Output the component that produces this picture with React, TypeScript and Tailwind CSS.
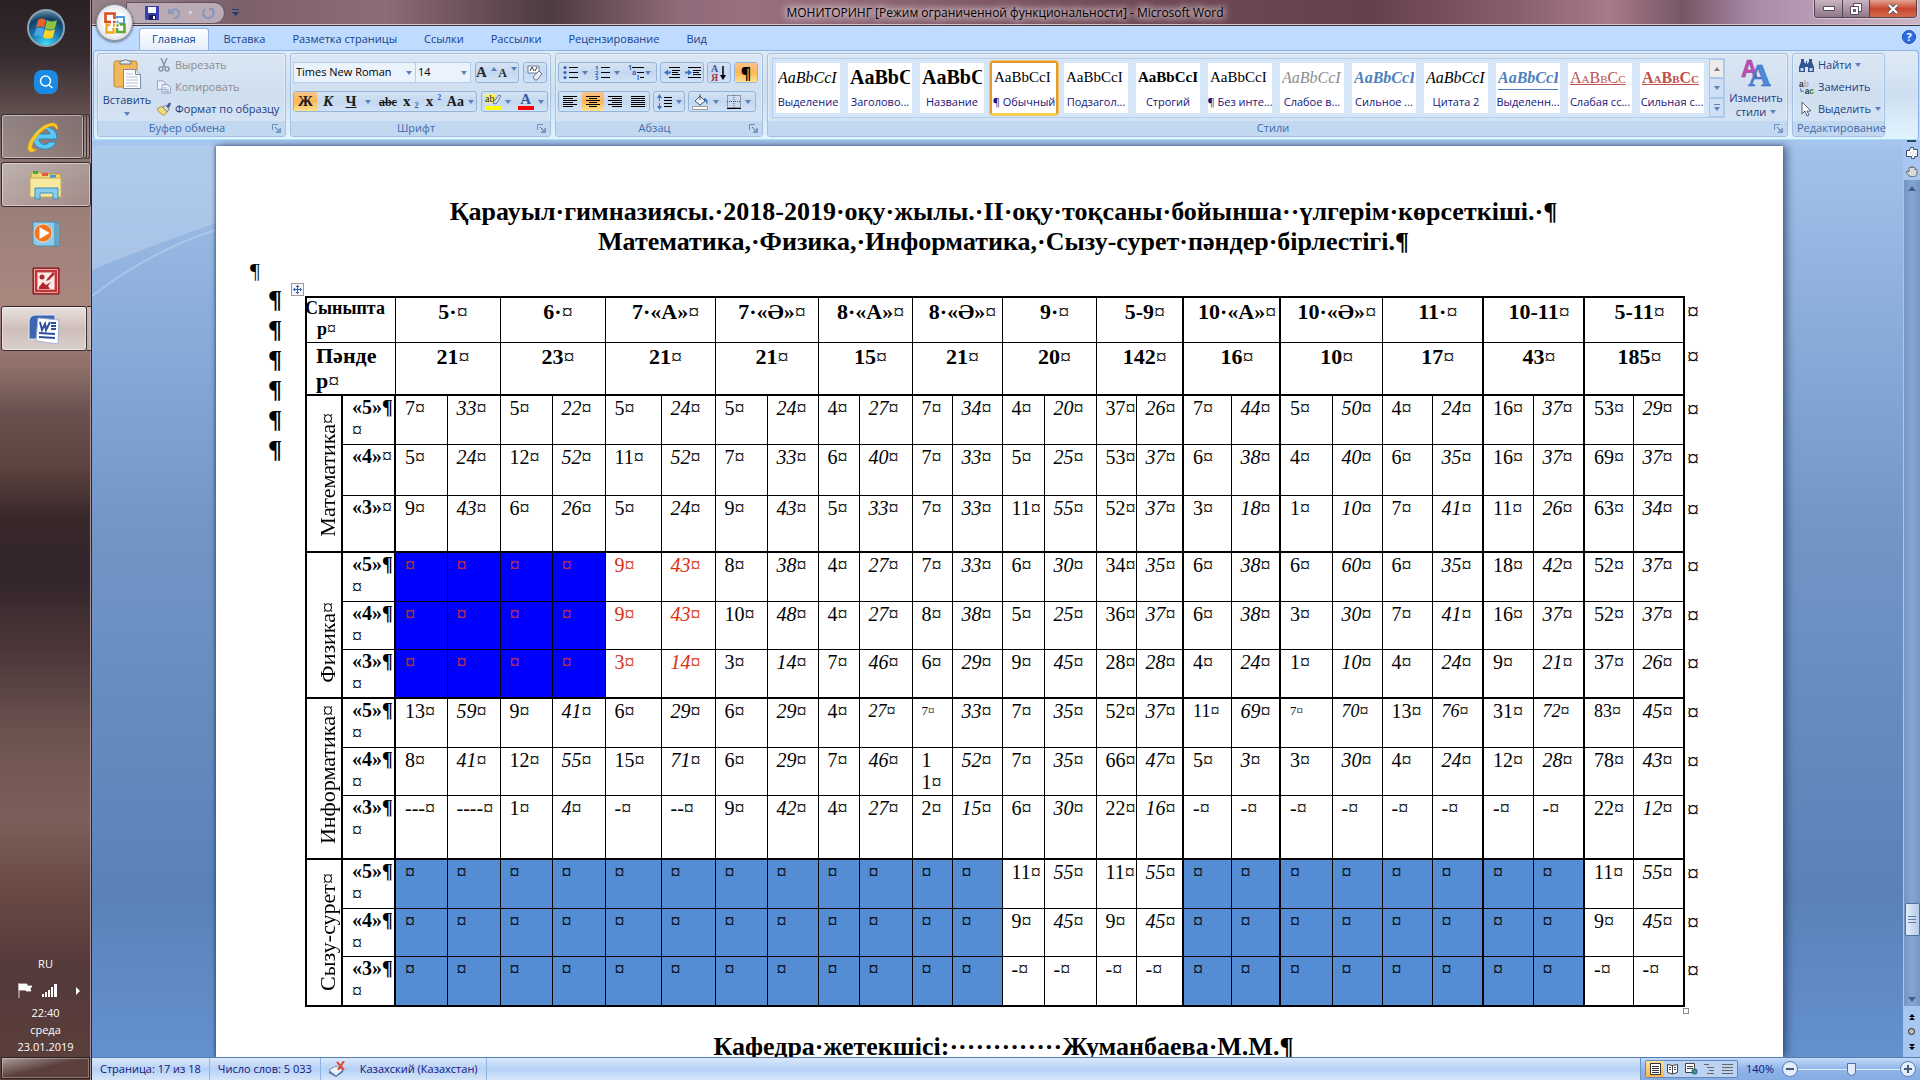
import type { ReactNode } from 'react';

const TABS = ['Главная', 'Вставка', 'Разметка страницы', 'Ссылки', 'Рассылки', 'Рецензирование', 'Вид'];

const STYLES = [
  { name: 'Выделение', sample: 'AaBbCcI', look: 'text-[16px] italic' },
  { name: 'Заголово...', sample: 'AaBbC', look: 'text-[20px] font-bold' },
  { name: 'Название', sample: 'AaBbC', look: 'text-[20px] font-bold' },
  { name: '¶ Обычный', sample: 'AaBbCcI', look: 'text-[15px]', active: true },
  { name: 'Подзагол...', sample: 'AaBbCcI', look: 'text-[15px]' },
  { name: 'Строгий', sample: 'AaBbCcI', look: 'text-[15px] font-bold' },
  { name: '¶ Без инте...', sample: 'AaBbCcI', look: 'text-[15px]' },
  { name: 'Слабое в...', sample: 'AaBbCcI', look: 'text-[16px] italic text-[#8c8c8c]' },
  { name: 'Сильное ...', sample: 'AaBbCcI', look: 'text-[16px] italic font-bold text-[#4f81bd]' },
  { name: 'Цитата 2', sample: 'AaBbCcI', look: 'text-[16px] italic' },
  { name: 'Выделенн...', sample: 'AaBbCcI', look: 'text-[16px] italic font-bold text-[#4f81bd] border-b border-[#4f81bd]' },
  { name: 'Слабая сс...', sample: 'AaBbCc', look: 'text-[16px] [font-variant-caps:small-caps] text-[#c0504d] underline' },
  { name: 'Сильная с...', sample: 'AaBbCc', look: 'text-[16px] font-bold [font-variant-caps:small-caps] text-[#c0504d] underline' },
];

const COL_WIDTHS = [
  36, 53, 52, 53, 52, 53, 56, 54, 52, 51, 41, 53, 40, 50, 42, 52, 40, 47, 48, 49, 52, 50, 50, 51, 50, 51, 49, 51, 20,
];

const CLASSES = ['5·', '6·', '7·«А»', '7·«Ә»', '8·«А»', '8·«Ә»', '9·', '5-9', '10·«А»', '10·«Ә»', '11·', '10-11', '5-11'];
const TOTALS = ['21', '23', '21', '21', '15', '21', '20', '142', '16', '10', '17', '43', '185'];

// b: dark blue cell, s: sky blue cell; suffixes r: red, m: medium, t: tiny
const SUBJECTS = [
  {
    name: 'Математика',
    rows: [
      { mark: '5', wrap: true, h: 'h-[49px]', cells: '7 33 5 22 5 24 5 24 4 27 7 34 4 20 37 26 7 44 5 50 4 24 16 37 53 29' },
      { mark: '4', wrap: false, h: 'h-[51px]', cells: '5 24 12 52 11 52 7 33 6 40 7 33 5 25 53 37 6 38 4 40 6 35 16 37 69 37' },
      { mark: '3', wrap: false, h: 'h-[57px]', cells: '9 43 6 26 5 24 9 43 5 33 7 33 11 55 52 37 3 18 1 10 7 41 11 26 63 34' },
    ],
  },
  {
    name: 'Физика',
    rows: [
      { mark: '5', wrap: true, h: 'h-[49px]', cells: 'b b b b 9r 43r 8 38 4 27 7 33 6 30 34 35 6 38 6 60 6 35 18 42 52 37' },
      { mark: '4', wrap: true, h: 'h-[48px]', cells: 'b b b b 9r 43r 10 48 4 27 8 38 5 25 36 37 6 38 3 30 7 41 16 37 52 37' },
      { mark: '3', wrap: true, h: 'h-[49px]', cells: 'b b b b 3r 14r 3 14 7 46 6 29 9 45 28 28 4 24 1 10 4 24 9 21 37 26' },
    ],
  },
  {
    name: 'Информатика',
    rows: [
      { mark: '5', wrap: true, h: 'h-[49px]', cells: '13 59 9 41 6 29 6 29 4 27m 7t 33 7 35 52 37 11m 69 7t 70m 13 76m 31 72m 83m 45' },
      { mark: '4', wrap: true, h: 'h-[48px]', cells: '8 41 12 55 15 71 6 29 7 46 1/1 52 7 35 66 47 5 3 3 30 4 24 12 28 78 43' },
      { mark: '3', wrap: true, h: 'h-[64px]', cells: '--- ---- 1 4 - -- 9 42 4 27 2 15 6 30 22 16 - - - - - - - - 22 12' },
    ],
  },
  {
    name: 'Сызу-сурет',
    rows: [
      { mark: '5', wrap: true, h: 'h-[49px]', cells: 's s s s s s s s s s s s 11 55 11 55 s s s s s s s s 11 55' },
      { mark: '4', wrap: true, h: 'h-[48px]', cells: 's s s s s s s s s s s s 9 45 9 45 s s s s s s s s 9 45' },
      { mark: '3', wrap: true, h: 'h-[50px]', cells: 's s s s s s s s s s s s - - - - s s s s s s s s - -' },
    ],
  },
];

const THICK_AFTER = [15, 17, 21, 23, 25];

function Arrow({ className = '' }: { className?: string }) {
  return (
    <svg viewBox="0 0 6 4" className={`w-[6px] h-[4px] shrink-0 ${className}`}>
      <path d="M0 0h6L3 4z" fill="#5a82b8" />
    </svg>
  );
}

function Launcher() {
  return (
    <svg viewBox="0 0 9 9" className="w-[9px] h-[9px]">
      <path d="M.5 6V.5H6" fill="none" stroke="#6a8fbe" />
      <path d="M3 3l3 3" stroke="#4a6f9f" />
      <path d="M8.5 4v4.5H4z" fill="#7f9dc4" stroke="#5b7fae" strokeWidth=".6" />
    </svg>
  );
}

function Group({ title, launcher = false, className = '', children }: { title: string; launcher?: boolean; className?: string; children: ReactNode }) {
  return (
    <section className={`flex flex-col rounded-[3px] border border-[#a3c0e0] shadow-[inset_0_0_0_1px_rgba(255,255,255,0.35)] bg-linear-to-b from-[#dae6f4] via-[#cfdff0] to-[#d6e6f6] ${className}`}>
      <div className="flex-1 flex">{children}</div>
      <div className="h-[15px] flex items-center bg-[#c1d8f0] text-[#3e6aaa] px-1 rounded-b-[3px]">
        <span className="flex-1 text-center whitespace-nowrap">{title}</span>
        {launcher && (
          <button aria-label={title}>
            <Launcher />
          </button>
        )}
      </div>
    </section>
  );
}

function Strip({ className = '', children }: { className?: string; children: ReactNode }) {
  return (
    <div className={`flex h-[21px] rounded-[3px] border border-[#94b4dc] bg-linear-to-b from-[#d5e3f3] via-[#c4d8f0] to-[#d0e2f6] ${className}`}>
      {children}
    </div>
  );
}

function Tool({ label, on = false, className = '', children }: { label: string; on?: boolean; className?: string; children: ReactNode }) {
  return (
    <button
      aria-label={label}
      className={`flex-1 flex items-center justify-center gap-1 leading-none ${on ? 'bg-linear-to-b from-[#f9c58b] via-[#fcb653] to-[#fee38f]' : ''} ${className}`}
    >
      {children}
    </button>
  );
}

function Lines({ rows }: { rows: [number, number][] }) {
  return (
    <svg viewBox="0 0 14 13" className="w-[14px] h-[13px]">
      {rows.map(([x, w], i) => (
        <path key={i} d={`M${x} ${i * 2 + 1.5}h${w}`} stroke="#000" />
      ))}
    </svg>
  );
}

function OfficeButton() {
  return (
    <button aria-label="Office" className="absolute left-[4px] top-[4px] z-10 size-[37px] rounded-full border border-[#8d8f98] bg-radial from-white from-40% to-[#c3c7d2] shadow-[0_1px_3px_rgba(0,0,0,0.6)] flex items-center justify-center">
      <svg viewBox="0 0 24 24" className="size-[24px]" fill="none" strokeWidth="2.6">
        <path d="M8 11H2.500V2.500h9V8" stroke="#dd4a1c" />
        <path d="M14 7.500V6h7v6.500h-5" stroke="#4f9bdc" strokeWidth="2" />
        <path d="M7 14H3.500v7.500h7V17" stroke="#f2a81d" strokeWidth="2.300" />
        <path d="M17 13.500h4.500v7.500H14v-4" stroke="#64a433" />
        <path d="M10 11h2.500" stroke="#dd4a1c" strokeWidth="2.500" />
        <path d="M13.500 11h2" stroke="#4f9bdc" strokeWidth="2.500" />
        <path d="M10 14.500h2" stroke="#f2a81d" strokeWidth="2.500" />
        <path d="M13.500 14.500h2" stroke="#64a433" strokeWidth="2.500" />
      </svg>
    </button>
  );
}

function TitleBar() {
  return (
    <header className="relative h-[26px] flex items-start border-b border-[#3f343c] shadow-[inset_0_-1px_0_#d9c8cf] bg-[linear-gradient(90deg,#958389_0%,#7c6069_8%,#8d6c78_16%,#70545f_20%,#4d3a42_25%,#8f6a79_32%,#9a7080_36%,#88606e_45%,#714b58_56%,#65404a_70%,#895f6d_78%,#a87a8b_83%,#765665_87%,#a98aa8_91%,#b79bb4_94%,#cbb4c6_100%)]">
      <div className="absolute left-[34px] top-[2px] w-[99px] h-[22px] rounded-r-full border border-[#5f5460] bg-[#b9aab4] flex items-center pl-[18px]">
        <button aria-label="Сохранить">
          <svg viewBox="0 0 14 14" className="size-[14px]">
            <path d="M0 0h14v14H1l-1-1z" fill="#3c3fae" />
            <path d="M3 1h8v6H3z" fill="#f3f5ff" />
            <path d="M4 9h7v5H4z" fill="#1d1e4b" />
            <path d="M8 10h2v3H8z" fill="#fff" />
          </svg>
        </button>
        <button aria-label="Отменить" className="ml-[9px]">
          <svg viewBox="0 0 13 13" className="size-[13px]" fill="none" stroke="#8798bd" strokeWidth="2">
            <path d="M1 2v4h5M2 5c3-4 9-3 9 1 0 3-2 5-5 5" />
          </svg>
        </button>
        <svg viewBox="0 0 6 4" className="ml-[7px] w-[5px] h-[4px]"><path d="M0 0h6L3 4z" fill="#ddd5dc" /></svg>
        <button aria-label="Повторить" className="ml-[9px]">
          <svg viewBox="0 0 13 13" className="size-[13px]" fill="none" stroke="#8798bd" strokeWidth="2">
            <path d="M7 2h4v4M11 3c2 4-1 8-5 8C1 11 0 5 3 2" />
          </svg>
        </button>
      </div>
      <button aria-label="Настройка панели быстрого доступа" className="absolute left-[140px] top-[9px]">
        <svg viewBox="0 0 7 7" className="size-[7px]">
          <path d="M0 .5h7" stroke="#1f3d7d" />
          <path d="M0 3h7L3.500 7z" fill="#1f3d7d" />
        </svg>
      </button>
      <h1 className="flex-1 text-center pl-[104px] pt-[4px] text-[12px] leading-[18px] text-black [text-shadow:0_0_6px_#e8dce2,0_0_8px_#e8dce2,0_0_10px_#e8dce2]">
        МОНИТОРИНГ [Режим ограниченной функциональности] - Microsoft Word
      </h1>
      <div className="mr-[3px] h-[18px] flex rounded-b-[4px] border border-t-0 border-[#4f4450] overflow-hidden shadow-[0_0_0_1px_rgba(255,255,255,0.4)]">
        <button aria-label="Свернуть" className="w-[28px] flex items-center justify-center border-r border-[#4f4450] bg-linear-to-b from-[#c9b6c2] to-[#8e7789]">
          <svg viewBox="0 0 12 5" className="w-[12px] h-[5px]"><path d="M.5.500h11v4H.5z" fill="#fff" stroke="#544a5a" /></svg>
        </button>
        <button aria-label="Восстановить" className="w-[27px] flex items-center justify-center border-r border-[#4f4450] bg-linear-to-b from-[#c9b6c2] to-[#8e7789]">
          <svg viewBox="0 0 12 12" className="size-[12px]" fill="#fff" stroke="#544a5a"><path d="M3.500.500h8v8h-8z" /><path d="M.5 3.500h8v8h-8z" /><path d="M3.500 6.500h2v2h-2z" fill="#8e7789" /></svg>
        </button>
        <button aria-label="Закрыть" className="w-[46px] flex items-center justify-center bg-linear-to-b from-[#e0a493] via-[#c8472c] to-[#d2694c]">
          <svg viewBox="0 0 12 10" className="w-[12px] h-[10px]"><path d="M2 1l8 8M10 1L2 9" stroke="#544a5a" strokeWidth="4" /><path d="M2 1l8 8M10 1L2 9" stroke="#fff" strokeWidth="2.400" /></svg>
        </button>
      </div>
      <OfficeButton />
    </header>
  );
}

function Clipboard() {
  return (
    <Group title="Буфер обмена" launcher className="w-[189px]">
      <button className="w-[58px] flex flex-col items-center pt-[4px] text-[#1e3e7e]">
        <svg viewBox="0 0 28 31" className="w-[28px] h-[31px]">
          <rect x="1" y="3" width="23" height="26" rx="2" fill="#efb95b" stroke="#c48a33" />
          <path d="M7 6V3h3a3 3 0 015 0h3v3z" fill="#e7e9ee" stroke="#6d7684" />
          <path d="M10.500 11.500h12l5 5v14h-17z" fill="#fff" stroke="#7d8ba6" />
          <path d="M22.500 11.500v5h5" fill="#dfe6f2" stroke="#7d8ba6" />
          <path d="M13 16h7M13 19h12M13 22h12M13 25h12M13 28h12" stroke="#b2bfd6" />
        </svg>
        <span className="mt-[3px] leading-[16px]">Вставить</span>
        <Arrow className="mt-[4px]" />
      </button>
      <div className="flex flex-col pl-px *:h-[22px] *:flex *:items-center *:gap-[4px] *:whitespace-nowrap">
        <button className="text-[#8d8d8d]">
          <svg viewBox="0 0 14 14" className="size-[14px]" fill="none" stroke="#8694a9" strokeWidth="1.500"><path d="M4 0l4 9M10 0L6 9" /><circle cx="4" cy="11" r="2" /><circle cx="10" cy="11" r="2" /></svg>
          Вырезать
        </button>
        <button className="text-[#8d8d8d]">
          <svg viewBox="0 0 15 14" className="w-[14px] h-[14px]" fill="#eef3fa" stroke="#8c9dbb"><path d="M.5.500h6l2 2v7h-8z" /><path d="M5.500 4.500h6l3 3v6h-9z" /><path d="M7 8h3M7 10h6M7 12h6" /></svg>
          Копировать
        </button>
        <button className="text-[#1e3e7e]">
          <svg viewBox="0 0 15 14" className="w-[14px] h-[14px]"><path d="M0 7l5-3 6 6-4 4C5 13 2 10 0 7z" fill="#f1df7c" stroke="#a38b34" /><path d="M6 5l3-2 4 4-2 3z" fill="#ddd" stroke="#777" /><path d="M10 4l3-4 2 1-2 5z" fill="#3f56a3" /></svg>
          Формат по образцу
        </button>
      </div>
    </Group>
  );
}

function FontGroup() {
  return (
    <Group title="Шрифт" launcher className="w-[261px]">
      <div className="flex-1 px-[2px] pt-[8px] flex flex-col gap-2">
        <div className="flex gap-[4px]">
          <div className="flex">
            <div className="relative flex items-center">
              <select aria-label="Шрифт" className="appearance-none w-[123px] h-[21px] pl-[2px] border border-[#b3cdec] bg-[#eaf2fb] text-black">
                <option>Times New Roman</option>
              </select>
              <Arrow className="absolute right-[4px]" />
            </div>
            <div className="relative flex items-center">
              <select aria-label="Размер шрифта" className="appearance-none w-[55px] h-[21px] pl-[2px] border border-l-0 border-[#b3cdec] bg-[#eaf2fb] text-black">
                <option>14</option>
              </select>
              <Arrow className="absolute right-[4px]" />
            </div>
          </div>
          <Strip className="w-[44px] font-['Liberation_Serif',serif] font-bold text-[#2b2b2b]">
            <Tool label="Увеличить размер" className="gap-0 text-[15px]">A<Arrow className="rotate-180 mb-2" /></Tool>
            <Tool label="Уменьшить размер" className="gap-0 text-[12px]">A<Arrow className="mb-2" /></Tool>
          </Strip>
          <Strip className="w-[24px]">
            <Tool label="Очистить формат">
              <svg viewBox="0 0 16 16" className="size-[16px]"><path d="M1 1h11v7H1z" fill="#fff" stroke="#66779a" /><path d="M3 6l2-4 2 4M8 6l2-4" fill="none" stroke="#333" /><path d="M6 12l6-6 3 3-5 6H8z" fill="#f0eef7" stroke="#6b7594" /></svg>
            </Tool>
          </Strip>
        </div>
        <div className="flex gap-[4px]">
          <Strip className="w-[184px] font-['Liberation_Serif',serif] font-bold text-[15px] text-[#1a1a1a]">
            <Tool label="Полужирный" on>Ж</Tool>
            <Tool label="Курсив" className="italic">К</Tool>
            <Tool label="Подчеркнутый" className="px-1.5"><u>Ч</u><Arrow className="ml-1" /></Tool>
            <Tool label="Зачеркнутый" className="text-[12px] line-through">abc</Tool>
            <Tool label="Подстрочный" className="gap-0">x<span className="text-[8px] text-[#2f5fb5] mt-2">2</span></Tool>
            <Tool label="Надстрочный" className="gap-0">x<span className="text-[8px] text-[#2f5fb5] mb-2">2</span></Tool>
            <Tool label="Регистр" className="gap-0.5 px-0.5 text-[14px]">Aa<Arrow /></Tool>
          </Strip>
          <Strip className="w-[67px]">
            <Tool label="Цвет выделения">
              <svg viewBox="0 0 16 16" className="size-[16px]"><path d="M0 0h10v9H0z" fill="#fbf26a" /><text x="0" y="8" fontSize="10" fontFamily="Liberation Serif, serif" fill="#222">ab</text><path d="M8 9l6-8 2 1-5 8z" fill="#dfe7f5" stroke="#4a5f8c" strokeWidth=".8" /><path d="M0 12h16v4H0z" fill="#ff0" /></svg>
              <Arrow />
            </Tool>
            <Tool label="Цвет текста">
              <span className="w-[16px] h-[17px] border-b-4 border-[#f00] text-[15px] leading-[13px] text-center font-bold text-[#35599c] font-['Liberation_Serif',serif]">A</span>
              <Arrow />
            </Tool>
          </Strip>
        </div>
      </div>
    </Group>
  );
}

function ListIcon({ marks }: { marks: string[] }) {
  return (
    <svg viewBox="0 0 15 15" className="size-[15px]">
      {marks.map((m, i) => (
        <g key={i}>
          {m === '•' ? (
            <circle cx="2" cy={i * 5 + 2.5} r="1.500" fill="#2f5fb5" />
          ) : (
            <text x="0" y={i * 5 + 4.5} fontSize="6" fontWeight="bold" fill="#2f5fb5">{m}</text>
          )}
          <path d={`M6 ${i * 5 + 2.5}h9`} stroke="#000" />
        </g>
      ))}
    </svg>
  );
}

function Paragraph() {
  return (
    <Group title="Абзац" launcher className="w-[208px]">
      <div className="flex-1 px-[2px] pt-[8px] flex flex-col gap-2">
        <div className="flex gap-[3px]">
          <Strip className="w-[99px]">
            <Tool label="Маркеры"><ListIcon marks={['•', '•', '•']} /><Arrow /></Tool>
            <Tool label="Нумерация"><ListIcon marks={['1', '2', '3']} /><Arrow /></Tool>
            <Tool label="Многоуровневый список">
              <svg viewBox="0 0 17 15" className="w-[17px] h-[15px]" fill="#2f5fb5" fontSize="7" fontWeight="bold"><text x="0" y="5">1</text><text x="4" y="10">a</text><text x="9" y="15">i</text><path d="M4 2.500h12M9 7.500h7M12 12.500h4" stroke="#000" /></svg>
              <Arrow className="-ml-1" />
            </Tool>
          </Strip>
          <Strip className="w-[44px]">
            <Tool label="Уменьшить отступ">
              <svg viewBox="0 0 16 14" className="w-[16px] h-[14px]"><path d="M5 1.500h11M8 4.500h8M8 6.500h6M8 8.500h8M5 11.500h11" stroke="#000" /><path d="M0 6.500l4-3v2h3v2H4v2z" fill="#3f73c7" /></svg>
            </Tool>
            <Tool label="Увеличить отступ">
              <svg viewBox="0 0 16 14" className="w-[16px] h-[14px]"><path d="M3 1.500h13M8 4.500h8M8 6.500h6M8 8.500h8M3 11.500h13" stroke="#000" /><path d="M7 6.500l-4-3v2H0v2h3v2z" fill="#3f73c7" /></svg>
            </Tool>
          </Strip>
          <Strip className="w-[24px]">
            <Tool label="Сортировка">
              <svg viewBox="0 0 16 18" className="w-[16px] h-[18px]" fontFamily="Liberation Serif, serif" fontWeight="bold" fontSize="10"><text x="0" y="8" fill="#35599c">А</text><text x="0" y="17" fill="#a3373a">Я</text><path d="M12 2v11" stroke="#000" strokeWidth="1.500" /><path d="M9 11h6l-3 5z" /></svg>
            </Tool>
          </Strip>
          <Strip className="w-[24px]">
            <Tool label="Отобразить все знаки" on className="text-[16px] font-bold">¶</Tool>
          </Strip>
        </div>
        <div className="flex gap-[3px]">
          <Strip className="w-[92px]">
            <Tool label="По левому краю"><Lines rows={[[0, 14], [0, 10], [0, 14], [0, 10], [0, 14], [0, 10]]} /></Tool>
            <Tool label="По центру" on><Lines rows={[[0, 14], [3, 8], [0, 14], [3, 8], [0, 14], [3, 8]]} /></Tool>
            <Tool label="По правому краю"><Lines rows={[[0, 14], [4, 10], [0, 14], [4, 10], [0, 14], [4, 10]]} /></Tool>
            <Tool label="По ширине"><Lines rows={[[0, 14], [0, 14], [0, 14], [0, 14], [0, 14], [0, 14]]} /></Tool>
          </Strip>
          <Strip className="w-[32px]">
            <Tool label="Интервал">
              <svg viewBox="0 0 15 16" className="w-[15px] h-[16px]"><path d="M2.500 3v10" stroke="#3f73c7" strokeDasharray="4 2" /><path d="M0 4l2.500-4L5 4zM0 12l2.500 4L5 12z" fill="#3f73c7" /><path d="M7 3.500h8M7 6.500h8M7 9.500h8M7 12.500h8" stroke="#000" /></svg>
              <Arrow />
            </Tool>
          </Strip>
          <Strip className="w-[68px]">
            <Tool label="Заливка">
              <svg viewBox="0 0 17 16" className="w-[17px] h-[16px]"><path d="M3 7l5-5 5 5-5 4z" fill="#eef2f8" stroke="#4c5a76" /><path d="M8 6V0" stroke="#4c5a76" /><path d="M12 4c4 1 4 4 3 7-1-3-1-4-3-5z" fill="#3a6fc0" /><path d="M.5 12.500h15v3H.5z" fill="#fff" stroke="#999" /></svg>
              <Arrow />
            </Tool>
            <Tool label="Границы">
              <svg viewBox="0 0 14 14" className="size-[14px]"><path d="M.5.500h13v12H.5zM7 0v13M0 6.500h14" fill="none" stroke="#555" strokeDasharray="1 1" /><path d="M0 13.500h14" stroke="#000" /></svg>
              <Arrow />
            </Tool>
          </Strip>
        </div>
      </div>
    </Group>
  );
}

function StylesGroup() {
  return (
    <Group title="Стили" launcher className="flex-1 min-w-0 max-w-[1021px]">
      <div className="flex-1 min-w-0 ml-[4px] mt-[4px] mb-[3px] flex border border-[#b3cdec] bg-[#d5e6f8]">
        <div className="flex-1 flex gap-1 items-center pl-px overflow-hidden">
          {STYLES.map((s) => (
            <button
              key={s.name}
              className={`w-[68px] h-[54px] shrink-0 border-2 ${s.active ? 'rounded-[3px] border-[#e39a2d] border-b-[#fbcf3c] shadow-[0_0_0_1px_#f5c56d]' : 'border-transparent'}`}
            >
              <span className="h-full bg-white flex flex-col items-center">
                <span className={`block w-[60px] h-[25px] mt-[2px] leading-[25px] overflow-hidden whitespace-nowrap text-left font-['Liberation_Serif',serif] ${s.look}`}>
                  {s.sample}
                </span>
                <span className="mt-[4px] leading-[16px] whitespace-nowrap text-[#15157a]">{s.name}</span>
              </span>
            </button>
          ))}
        </div>
        <div className="w-[15px] flex flex-col *:flex-1 *:border *:border-[#a9c6ea] *:flex *:items-center *:justify-center">
          <button aria-label="Вверх" className="bg-[#ececec]"><Arrow className="rotate-180 grayscale" /></button>
          <button aria-label="Вниз" className="bg-[#cfe0f5]"><Arrow /></button>
          <button aria-label="Дополнительно" className="bg-[#cfe0f5]">
            <span className="border-t border-[#5a82b8] pt-[2px]"><Arrow /></span>
          </button>
        </div>
      </div>
      <button className="w-[62px] flex flex-col items-center pt-[5px] text-[#1e3e7e] leading-[14px]">
        <svg viewBox="0 0 30 28" className="w-[30px] h-[28px]" fontFamily="Liberation Serif, serif" fontWeight="bold">
          <text x="0" y="18" fontSize="23" fill="#c04fb0" stroke="#8b3aa0" strokeWidth=".5" fontFamily="Liberation Sans, sans-serif">A</text>
          <text x="7" y="27" fontSize="32" fill="#4f88dc" stroke="#2d5ba8" strokeWidth=".5">A</text>
        </svg>
        <span className="mt-[4px]">Изменить</span>
        <span className="flex items-center gap-1">стили<Arrow /></span>
      </button>
    </Group>
  );
}

function Editing() {
  return (
    <Group title="Редактирование" className="w-[93px]">
      <div className="flex flex-col pl-[6px] text-[#1e3e7e] *:h-[22px] *:flex *:items-center *:gap-[4px]">
        <button>
          <svg viewBox="0 0 15 13" className="w-[15px] h-[13px]" fill="#33558f"><path d="M2 0h3v3l2 2V2h1v3l2-2V0h3v3l2 5v5H9V8H6v5H0V8l2-5z" /><path d="M1.500 9h3v3h-3zM10.500 9h3v3h-3z" fill="#c5d6f0" /></svg>
          Найти<Arrow />
        </button>
        <button>
          <svg viewBox="0 0 16 16" className="w-[15px] h-[15px]" fontWeight="bold" fontSize="9" fontFamily="Liberation Sans, sans-serif"><text x="0" y="7" fill="#333">a<tspan fill="#aaa">b</tspan></text><path d="M2 9v3h3" stroke="#2f5fb5" fill="none" /><text x="6" y="15" fill="#333">a<tspan fill="#1a8a2a">c</tspan></text></svg>
          Заменить
        </button>
        <button>
          <svg viewBox="0 0 15 15" className="size-[15px]"><path d="M3 0v12l3-3 2 5 2-1-2-4h4z" fill="#fff" stroke="#50607c" /></svg>
          Выделить<Arrow />
        </button>
      </div>
    </Group>
  );
}

function Ribbon() {
  return (
    <div>
      <nav className="h-[24px] bg-[#bfdbff] flex items-end pl-[47px] text-[#15428b]">
        {TABS.map((t, i) => (
          <button
            key={t}
            className={`h-[22px] px-3 mr-[3px] whitespace-nowrap ${i === 0 ? 'rounded-t-[3px] border border-b-0 border-[#8db2e3] bg-linear-to-b from-white to-[#e3eefb]' : ''}`}
          >
            {t}
          </button>
        ))}
        <button aria-label="Справка" className="ml-auto mr-[4px] mb-[6px] size-[14px] rounded-full border border-[#1d4fb5] bg-[#2f6be0] text-white font-bold leading-[12px]">?</button>
      </nav>
      <div className="h-[90px] mx-px p-[2px] pl-[3px] flex gap-1 rounded-[4px] border border-[#8db2e3] border-b-[#9fe6f5] bg-linear-to-b from-[#dfeaf6] via-[#cedff1] to-[#e2f3ff]">
        <Clipboard />
        <FontGroup />
        <Paragraph />
        <StylesGroup />
        <Editing />
      </div>
    </div>
  );
}

function Cell({ value, index, lastRow }: { value: string; index: number; lastRow: boolean }) {
  const percent = index % 2 === 1;
  const text = value.replace(/[bsrmt]/, '');
  const [first, second] = text.split('/');
  let look = 'text-[20px]';
  if (value.endsWith('m')) look = 'text-[18px]';
  if (value.endsWith('t')) look = 'text-[13px]';
  if (value === 'b') look = 'text-[20px] bg-[#0000ff] text-[#d8322a]';
  if (value === 's') look = 'text-[20px] bg-[#548dd4]';
  if (value.endsWith('r')) look = 'text-[20px] text-[#d83010]';
  return (
    <td
      className={`border border-black p-0 pl-[9px] pt-px align-top leading-[22px] whitespace-nowrap ${look} ${percent ? 'italic' : ''} ${index === 0 ? 'border-l-2' : ''} ${lastRow ? 'border-b-2' : ''} ${THICK_AFTER.includes(index) ? 'border-r-2' : ''}`}
    >
      {first}
      {second && <><br />{second}</>}
      <span className="not-italic">¤</span>
    </td>
  );
}

function HeadCell({ value, index, edge }: { value: string; index: number; edge: string }) {
  return (
    <th
      colSpan={2}
      className={`border border-black p-0 pl-[11px] align-top text-[22px] leading-[27px] whitespace-nowrap ${edge} ${THICK_AFTER.includes(index * 2 + 1) ? 'border-r-2' : ''}`}
    >
      {value}
      <span className="font-normal">¤</span>
    </th>
  );
}

function RowEnd() {
  return <td className="p-0 pl-[2px] align-top text-[24px] leading-[28px]">¤</td>;
}

function MarksTable() {
  return (
    <div className="relative mt-[11px]">
      <button aria-label="Переместить таблицу" className="absolute -left-[14px] -top-[13px] size-[13px] border border-[#9a9a9a] bg-[#f4f4f4]">
        <svg viewBox="0 0 11 11" className="size-[11px]" stroke="#2f62b5" fill="none"><path d="M5.500 1v9M1 5.500h9M4 2.500h3M4 8.500h3M2.500 4v3M8.500 4v3" /></svg>
      </button>
      <table className="table-fixed border-collapse w-[1398px]">
        <colgroup>
          {COL_WIDTHS.map((w, i) => (
            <col key={i} style={{ width: w }} />
          ))}
        </colgroup>
        <thead>
          <tr className="h-[45px]">
            <th colSpan={2} className="border border-t-2 border-l-2 border-black p-0 pl-[10px] -indent-[12px] text-left align-top text-[18px] leading-[21px]">
              Сыныпта
              <br />
              <span className="inline-block indent-0">р<span className="font-normal">¤</span></span>
            </th>
            {CLASSES.map((c, i) => (
              <HeadCell key={c} value={c} index={i} edge="border-t-2" />
            ))}
            <RowEnd />
          </tr>
          <tr className="h-[53px]">
            <th colSpan={2} className="border border-l-2 border-b-2 border-black p-0 pl-[9px] text-left align-top text-[22px] leading-[25px]">
              Пәнде
              <br />р<span className="font-normal">¤</span>
            </th>
            {TOTALS.map((t, i) => (
              <HeadCell key={i} value={t} index={i} edge="border-b-2" />
            ))}
            <RowEnd />
          </tr>
        </thead>
        {SUBJECTS.map((s) => (
          <tbody key={s.name}>
            {s.rows.map((r, i) => (
              <tr key={r.mark} className={r.h}>
                {i === 0 && (
                  <th rowSpan={3} className="border-2 border-black p-0 pl-[8px] pb-[14px] align-bottom font-normal text-[22px] leading-[26px]">
                    <span className="block [writing-mode:vertical-rl] rotate-180 whitespace-nowrap">{s.name}¤</span>
                  </th>
                )}
                <th className={`border border-l-2 border-black p-0 pl-[9px] text-left align-top text-[20px] leading-[23px] whitespace-nowrap ${i === 2 ? 'border-b-2' : ''}`}>
                  «{r.mark}»{r.wrap && <>¶<br /></>}
                  <span className="font-normal">¤</span>
                </th>
                {r.cells.split(' ').map((c, j) => (
                  <Cell key={j} value={c} index={j} lastRow={i === 2} />
                ))}
                <RowEnd />
              </tr>
            ))}
          </tbody>
        ))}
      </table>
      <span className="absolute right-[15px] -bottom-[7px] size-[6px] border border-[#8a8a8a]" />
    </div>
  );
}

function Page() {
  return (
    <article className="w-full max-w-[1567px] shrink-0 bg-white text-black pt-[51px] font-['Liberation_Serif',serif] shadow-[4px_0_8px_rgba(30,50,90,0.6),-1px_0_3px_rgba(30,50,90,0.6)]">
      <h2 className="text-center text-[26px] leading-[30px] font-bold pl-2 whitespace-nowrap">
        Қарауыл·гимназиясы.·2018-2019·оқу·жылы.·II·оқу·тоқсаны·бойынша··үлгерім·көрсеткіші.·¶
        <br />
        Математика,·Физика,·Информатика,·Сызу-сурет·пәндер·бірлестігі.¶
      </h2>
      <p className="pl-[34px] text-[22px] leading-[28px]">¶</p>
      <div className="flex">
        <div className="w-[89px] pl-[52px] text-[26px] leading-[30px] font-bold">
          {[0, 1, 2, 3, 4, 5].map((i) => (
            <p key={i}>¶</p>
          ))}
        </div>
        <MarksTable />
      </div>
      <p className="pt-[25px] text-center text-[26px] leading-[30px] font-bold pl-2">
        Кафедра·жетекшісі:·············Жуманбаева·М.М.¶
      </p>
    </article>
  );
}

function ScrollBar() {
  return (
    <div className="w-[17px] flex flex-col items-center bg-[#a8c6f2] text-[#1d2b45]">
      <span className="w-[9px] h-[2px] bg-[#3a4668]" />
      <button aria-label="Линейка" className="mt-[5px]">
        <svg viewBox="0 0 12 12" className="size-[12px]" fill="#fff" stroke="#3f5170"><path d="M.5 3.500h3l1-3h3v2h4v7h-3v2h-3v-2h-5z" /><path d="M4 6h1M7 5h1M6 8h1M9 7h1" stroke="#8a95aa" /></svg>
      </button>
      <button aria-label="Рука" className="mt-[6px]">
        <svg viewBox="0 0 12 12" className="size-[12px]"><path d="M3 11L0 7l1-1 2 1V3l1-1 1 1 1-2 1 1v1l1-1 1 1v2l1-1 1 1v4l-2 3z" fill="#dadada" stroke="#555" strokeWidth=".8" /></svg>
      </button>
      <div className="flex-1 w-full mt-[3px] flex flex-col items-center bg-linear-to-r from-[#7596c4] via-[#86a6d2] to-[#7596c4] border-l border-[#a8c6f2]">
        <svg viewBox="0 0 8 5" className="w-[8px] h-[5px] mt-[6px] shrink-0"><path d="M0 5h8L4 0z" fill="#435f93" /></svg>
        <div className="h-[712px]" />
        <button aria-label="Ползунок" className="w-[15px] h-[33px] rounded-[2px] border border-[#50709f] bg-linear-to-r from-[#e5edf8] to-[#b3cbe9] flex flex-col items-center justify-center gap-[2px] *:w-[8px] *:h-px *:bg-[#5f7dab]">
          <span /><span /><span />
        </button>
        <svg viewBox="0 0 8 5" className="w-[8px] h-[5px] mt-auto mb-1"><path d="M0 0h8L4 5z" fill="#435f93" /></svg>
      </div>
      <div className="h-[51px] w-full flex flex-col items-center justify-evenly">
        <button aria-label="Предыдущая страница"><svg viewBox="0 0 6 7" className="w-[6px] h-[7px]"><path d="M0 3h6L3 0zM0 6h6L3 3z" /></svg></button>
        <button aria-label="Объект перехода" className="size-[7px] rounded-full border border-[#222] bg-[#bbb]" />
        <button aria-label="Следующая страница"><svg viewBox="0 0 6 7" className="w-[6px] h-[7px]"><path d="M0 1h6L3 4zM0 4h6L3 7z" /></svg></button>
      </div>
    </div>
  );
}

function StatusBar() {
  return (
    <footer className="h-[23px] shrink-0 flex items-stretch border-t border-[#567db1] bg-linear-to-b from-[#dce9fa] via-[#b5d1f6] to-[#d7e6f9] text-[#15157a] whitespace-nowrap">
      <span className="px-2 flex items-center border-r border-[#8fb3e3]">Страница: 17 из 18</span>
      <span className="px-2 flex items-center border-r border-[#8fb3e3]">Число слов: 5 033</span>
      <button aria-label="Проверка правописания" className="pl-[8px] flex items-center">
        <svg viewBox="0 0 17 16" className="w-[17px] h-[16px]"><path d="M0 9l7-4 7 4-7 6z" fill="#eef2fb" stroke="#7c8db8" /><path d="M0 10l7 5 7-6v2l-7 5-7-4z" fill="#4965ad" /><path d="M8 1l7 8M15 0L9 9" stroke="#e4472b" strokeWidth="2" /></svg>
      </button>
      <span className="pl-[14px] pr-2 flex items-center border-r border-[#8fb3e3]">Казахский (Казахстан)</span>
      <div className="ml-auto flex items-center pl-1 pr-[4px] border-l border-[#6d94cb] bg-linear-to-b from-[#c4dafa] via-[#8fb5ea] to-[#84ace2]">
        <div className="flex w-[93px] h-[18px] rounded-[2px] border border-[#6288bd] bg-[#bcd4f2] *:flex-1 *:flex *:items-center *:justify-center">
          <button aria-label="Разметка страницы" className="bg-linear-to-b from-[#fbdf9d] to-[#fbb63f]">
            <svg viewBox="0 0 11 12" className="w-[11px] h-[12px]"><path d="M.5.500h10v11H.5z" fill="#fff" stroke="#333" /><path d="M2 3.500h7M2 5.500h7M2 7.500h7M2 9.500h7" stroke="#333" /></svg>
          </button>
          <button aria-label="Режим чтения">
            <svg viewBox="0 0 12 12" className="size-[12px]"><path d="M.5 1.500l5 1 5-1v8l-5 1.500-5-1.500zM5.500 2.500V11" fill="#fff" stroke="#444" /><path d="M2 4.500h2M2 6.500h2M7 4.500h2M7 6.500h2" stroke="#444" /></svg>
          </button>
          <button aria-label="Веб-документ">
            <svg viewBox="0 0 13 12" className="w-[13px] h-[12px]"><path d="M.5.500h9v9h-9z" fill="#fff" stroke="#444" /><path d="M2 3.500h6M2 5.500h6" stroke="#444" /><circle cx="9.500" cy="8.500" r="3" fill="#2b6fa5" /><path d="M8 8l2-1 1 2-2 1z" fill="#59a84b" /></svg>
          </button>
          <button aria-label="Структура">
            <svg viewBox="0 0 11 11" className="size-[11px]" stroke="#666"><path d="M0 .5h5M3 3.500h7M5 6.500h5M3 9.500h7" /></svg>
          </button>
          <button aria-label="Черновик">
            <svg viewBox="0 0 11 11" className="size-[11px]" stroke="#666"><path d="M0 .5h11M0 3.500h11M0 6.500h11M0 9.500h11" /></svg>
          </button>
        </div>
        <button className="w-[44px] text-center">140%</button>
        <button aria-label="Уменьшить" className="size-[16px] rounded-full border border-[#5a7db5] bg-[#e4edf9] flex items-center justify-center">
          <span className="w-[8px] h-[2px] bg-[#44597e]" />
        </button>
        <input
          type="range"
          aria-label="Масштаб"
          min={0}
          max={100}
          defaultValue={53}
          className="appearance-none w-[102px] h-[16px] bg-[linear-gradient(#e3eefb,#e3eefb)] bg-size-[100%_1px] bg-center bg-no-repeat [&::-webkit-slider-thumb]:appearance-none [&::-webkit-slider-thumb]:w-[9px] [&::-webkit-slider-thumb]:h-[13px] [&::-webkit-slider-thumb]:rounded-b-[5px] [&::-webkit-slider-thumb]:border [&::-webkit-slider-thumb]:border-[#4e6fa5] [&::-webkit-slider-thumb]:bg-[#dfeafa]"
        />
        <button aria-label="Увеличить" className="size-[16px] rounded-full border border-[#5a7db5] bg-[#e4edf9] flex items-center justify-center">
          <svg viewBox="0 0 8 8" className="size-[8px]"><path d="M0 4h8M4 0v8" stroke="#44597e" strokeWidth="2" /></svg>
        </button>
      </div>
    </footer>
  );
}

function TaskButton({ label, tone, children }: { label: string; tone: string; children: ReactNode }) {
  return (
    <button
      aria-label={label}
      className={`ml-px h-[45px] rounded-[3px] border border-[#3a2c2e] flex items-center justify-center shadow-[inset_0_0_0_1px_rgba(255,255,255,0.45)] ${tone}`}
    >
      {children}
    </button>
  );
}

function Taskbar() {
  return (
    <aside className="w-[92px] shrink-0 flex flex-col text-white border-r border-[#2d2328] shadow-[inset_-1px_0_0_#a89498] bg-[linear-gradient(180deg,#2a2024_0%,#352a2e_5%,#5f4c4c_10%,#8a7470_15%,#9c807a_20%,#a9877f_28%,#8e7069_34%,#6b5250_38%,#5d4440_43%,#39282a_48%,#32242a_53%,#4a3638_60%,#6d5350_68%,#7c5f5a_76%,#6a4a44_82%,#54393a_90%,#5b403b_100%)]">
      <button aria-label="Пуск" className="mt-[9px] self-center size-[38px] rounded-full border-2 border-[#8aa3b0] bg-[radial-gradient(circle_at_50%_100%,#3fe0ff,#1b6fa8_45%,#123f66_70%,#8fb4c8)] flex items-center justify-center">
        <svg viewBox="0 0 24 22" className="w-[24px] h-[22px]">
          <path d="M4 3c3-2 5-2 8 0l-2 8c-3-2-5-2-8 0z" fill="#e8602c" />
          <path d="M13 3c3 2 6 2 10 0l-2 8c-3 2-7 2-10 0z" fill="#8cc63e" />
          <path d="M2 12c3-2 5-2 8 0l-2 8c-3-2-5-2-8-1z" fill="#4aa5e8" />
          <path d="M11 12c3 2 6 2 10 0l-2 8c-3 2-7 2-10 0z" fill="#fcd12a" />
        </svg>
      </button>
      <button aria-label="Поиск" className="mt-[23px] self-center size-[24px] rounded-[8px] bg-[#1a8ae5] flex items-center justify-center">
        <svg viewBox="0 0 14 14" className="size-[14px]" fill="none" stroke="#fff" strokeWidth="1.500"><circle cx="6.500" cy="6" r="5" /><path d="M10 10l3.500 3" /></svg>
      </button>
      <div className="mt-[20px] flex">
        <TaskButton label="Internet Explorer" tone="w-[83px] bg-linear-to-br from-white/30 to-white/5">
          <svg viewBox="0 0 32 32" className="size-[32px]">
            <path d="M30 18H12c0 6 8 7 10 3h7c-4 11-23 9-23-4C6 3 31 2 30 18zM12 13h11c-1-6-10-6-11 0z" fill="#5cc6f4" stroke="#1e7fc0" strokeWidth=".8" />
            <path d="M31 8C31-1 20 1 11 9 2 18-2 29 3 31c2 1 5-1 7-3-3 1-5 0-5-3C6 20 12 12 18 8c6-4 10-4 11 0z" fill="#f9c728" stroke="#d39a12" strokeWidth=".5" />
          </svg>
        </TaskButton>
        <span className="w-[3px] h-[45px] border-r border-y border-[#3a2c2e] rounded-r-[3px] bg-white/20" />
        <span className="w-[3px] h-[45px] border-r border-y border-[#3a2c2e] rounded-r-[3px] bg-white/20" />
      </div>
      <div className="mt-[3px] flex flex-col">
        <TaskButton label="Проводник" tone="bg-linear-to-br from-white/45 to-white/10">
          <svg viewBox="0 0 34 30" className="w-[34px] h-[30px]">
            <path d="M2 2h9l2 2h18l1 3v19H2z" fill="#f0d877" stroke="#b99b3b" />
            <path d="M4 1h5v3H4z" fill="#2fb04a" /><path d="M13 3h6v3h-6z" fill="#e25a3a" /><path d="M21 5h6v3h-6z" fill="#3a9be0" />
            <path d="M1 8h31v19H1z" fill="#f8e9a1" stroke="#c8ac52" />
            <path d="M6 29V18h23v11h-5v-6H11v6z" fill="#86cdec" stroke="#3f8fb8" />
          </svg>
        </TaskButton>
      </div>
      <button aria-label="Проигрыватель" className="mt-[14px] self-center">
        <svg viewBox="0 0 28 26" className="w-[28px] h-[26px]">
          <path d="M1 1h22l4 1v23H5l-4-2z" fill="#8ecbe6" stroke="#4b8cb0" />
          <path d="M23 1v24M25 2v23" stroke="#3f7ea3" />
          <circle cx="11" cy="12" r="9" fill="#f3761d" stroke="#fff" strokeWidth=".6" />
          <path d="M7.500 6v12l10-6z" fill="#fff" />
        </svg>
      </button>
      <button aria-label="Диспетчер рисунков" className="mt-[20px] self-center">
        <svg viewBox="0 0 28 28" className="size-[28px]">
          <path d="M1 1h26v26H1z" fill="#c1363a" stroke="#7a1519" />
          <path d="M2.500 2.500h23v23h-23z" fill="none" stroke="#eba5a2" />
          <path d="M5.500 5.500h17v17h-17z" fill="#fbe9e7" stroke="#e59b98" />
          <circle cx="10" cy="10" r="2.500" fill="#b0282c" />
          <path d="M7 20l4-5 3 3 5-3-3 4 2 3H7zM15 12l6-7 2 2-6 6-3 1z" fill="#b0282c" />
        </svg>
      </button>
      <div className="mt-[11px] flex">
        <TaskButton label="Word" tone="w-[86px] bg-linear-to-b from-white/75 via-white/50 to-white/65">
          <svg viewBox="0 0 32 32" className="size-[32px]">
            <path d="M1 26V8q1-6 7-6h19v24z" fill="#3a66b3" stroke="#dfe8f7" />
            <path d="M10 5l21 2-1 24-22-3z" fill="#fff" stroke="#9fb2d4" />
            <path d="M12 9l2 8 3-6 1 6 4-8" fill="none" stroke="#2c4f9e" strokeWidth="2" />
            <path d="M23 10h5M23 13h5M23 16h5M11 20l16 1M11 24l16 1" stroke="#2c4f9e" strokeWidth="2" />
          </svg>
        </TaskButton>
        <span className="flex-1 h-[45px] border-y border-[#3a2c2e] bg-white/40" />
      </div>
      <div className="mt-auto flex flex-col items-center text-[11px] leading-[17px]">
        <span>RU</span>
        <div className="mt-[11px] mb-[6px] w-full pl-[18px] pr-[11px] flex items-center">
          <svg viewBox="0 0 15 15" className="size-[15px]" fill="#fff"><path d="M1 0v15M1 1h8v2h5l-2 3 1 2H8V7H1z" stroke="#fff" strokeWidth=".8" /></svg>
          <svg viewBox="0 0 15 13" className="ml-[9px] w-[15px] h-[13px]" fill="#fff"><path d="M0 10h2v3H0zM3 8h2v5H3zM6 6h2v7H6zM9 3h2v10H9zM12 0h3v13h-3z" /></svg>
          <svg viewBox="0 0 4 8" className="ml-auto w-[4px] h-[8px]" fill="#fff"><path d="M0 0l4 4-4 4z" /></svg>
        </div>
        <time className="flex flex-col items-center">
          <span>22:40</span>
          <span>среда</span>
          <span>23.01.2019</span>
        </time>
      </div>
      <button aria-label="Свернуть все окна" className="mt-[2px] mx-px mb-px h-[22px] border border-[#2d2023] shadow-[inset_0_0_0_1px_rgba(255,255,255,0.3)] bg-linear-to-br from-white/50 to-transparent to-50%" />
    </aside>
  );
}

export default function App() {
  return (
    <div className="h-screen overflow-hidden flex text-[11px] font-['Open_Sans',sans-serif]">
      <Taskbar />
      <div className="flex-1 min-w-0 flex flex-col bg-[#bfdbff]">
        <TitleBar />
        <Ribbon />
        <div className="relative flex-1 min-h-0 flex overflow-hidden bg-[linear-gradient(180deg,#a6c4ee_0%,#a6c4ee_6px,#a3c2ea_7px,#8fb0dd_17%,#7296c6_42%,#5a82b8_82%,#6491d0_100%)]">
          <svg viewBox="0 0 1828 160" preserveAspectRatio="none" className="absolute top-0 left-0 w-full h-[160px]">
            <path d="M0 6V130Q60 105 124 83Q300 30 600 6z" fill="#c3d8f2" opacity=".45" />
            <path d="M0 156Q60 110 124 90" fill="none" stroke="#c3d8f2" opacity=".5" strokeWidth="2" />
          </svg>
          <div className="relative flex-1 min-w-0 pt-[6px] pl-1 flex justify-center overflow-hidden">
            <Page />
          </div>
          <ScrollBar />
        </div>
        <StatusBar />
      </div>
    </div>
  );
}
